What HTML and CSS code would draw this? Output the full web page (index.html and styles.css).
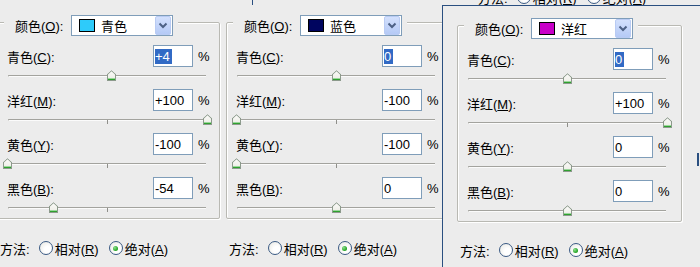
FILE: index.html
```html
<!DOCTYPE html>
<html lang="zh-CN">
<head>
<meta charset="utf-8">
<title>可选颜色</title>
<link rel="stylesheet" href="styles.css">
</head>
<body>
<div class="screen">

  <section class="dlg p1">
    <div class="group">
      <div class="head">
        <span class="lbl">颜色(<u>O</u>):</span>
        <div class="combo"><span class="swatch cyan"></span><span class="combo-text">青色</span><span class="arrow"><svg width="16" height="19" viewBox="0 0 16 19"><defs><linearGradient id="ab1" x1="0" y1="0" x2="0" y2="1"><stop offset="0" stop-color="#d4e1fd"/><stop offset="1" stop-color="#b4c9f6"/></linearGradient></defs><rect x="0.5" y="0.5" width="15" height="18" rx="1.5" fill="url(#ab1)" stroke="#b9cbf3"/><path d="M4.5 7.5 L8 11 L11.5 7.5" fill="none" stroke="#4d6185" stroke-width="2"/></svg></span></div>
      </div>
      <div class="rows">
        <div class="row">
          <div class="field"><span class="lbl">青色(<u>C</u>):</span><span class="input"><span class="sel">+4</span></span><span class="pct">%</span></div>
          <div class="slider"><span class="track"></span><span class="tick"></span><span class="thumb" style="left:100px"></span></div>
        </div>
        <div class="row">
          <div class="field"><span class="lbl">洋红(<u>M</u>):</span><span class="input">+100</span><span class="pct">%</span></div>
          <div class="slider"><span class="track"></span><span class="tick"></span><span class="thumb" style="left:196px"></span></div>
        </div>
        <div class="row">
          <div class="field"><span class="lbl">黄色(<u>Y</u>):</span><span class="input">-100</span><span class="pct">%</span></div>
          <div class="slider"><span class="track"></span><span class="tick"></span><span class="thumb" style="left:-4px"></span></div>
        </div>
        <div class="row">
          <div class="field"><span class="lbl">黑色(<u>B</u>):</span><span class="input">-54</span><span class="pct">%</span></div>
          <div class="slider"><span class="track"></span><span class="tick"></span><span class="thumb" style="left:42px"></span></div>
        </div>
      </div>
    </div>
    <div class="method">
      <span class="m-lbl">方法:</span>
      <span class="radio"></span><span class="r-lbl">相对(<u>R</u>)</span>
      <span class="radio on"></span><span class="r-lbl">绝对(<u>A</u>)</span>
    </div>
  </section>

  <section class="dlg p2">
    <span class="edge"></span>
    <div class="group">
      <div class="head">
        <span class="lbl">颜色(<u>O</u>):</span>
        <div class="combo"><span class="swatch navy"></span><span class="combo-text">蓝色</span><span class="arrow"><svg width="16" height="19" viewBox="0 0 16 19"><defs><linearGradient id="ab2" x1="0" y1="0" x2="0" y2="1"><stop offset="0" stop-color="#d4e1fd"/><stop offset="1" stop-color="#b4c9f6"/></linearGradient></defs><rect x="0.5" y="0.5" width="15" height="18" rx="1.5" fill="url(#ab2)" stroke="#b9cbf3"/><path d="M4.5 7.5 L8 11 L11.5 7.5" fill="none" stroke="#4d6185" stroke-width="2"/></svg></span></div>
      </div>
      <div class="rows">
        <div class="row">
          <div class="field"><span class="lbl">青色(<u>C</u>):</span><span class="input"><span class="sel">0</span></span><span class="pct">%</span></div>
          <div class="slider"><span class="track"></span><span class="tick"></span><span class="thumb" style="left:96px"></span></div>
        </div>
        <div class="row">
          <div class="field"><span class="lbl">洋红(<u>M</u>):</span><span class="input">-100</span><span class="pct">%</span></div>
          <div class="slider"><span class="track"></span><span class="tick"></span><span class="thumb" style="left:-4px"></span></div>
        </div>
        <div class="row">
          <div class="field"><span class="lbl">黄色(<u>Y</u>):</span><span class="input">-100</span><span class="pct">%</span></div>
          <div class="slider"><span class="track"></span><span class="tick"></span><span class="thumb" style="left:-4px"></span></div>
        </div>
        <div class="row">
          <div class="field"><span class="lbl">黑色(<u>B</u>):</span><span class="input">0</span><span class="pct">%</span></div>
          <div class="slider"><span class="track"></span><span class="tick"></span><span class="thumb" style="left:96px"></span></div>
        </div>
      </div>
    </div>
    <div class="method">
      <span class="m-lbl">方法:</span>
      <span class="radio"></span><span class="r-lbl">相对(<u>R</u>)</span>
      <span class="radio on"></span><span class="r-lbl">绝对(<u>A</u>)</span>
    </div>
  </section>

  <section class="dlg p3">
    <span class="edge-r"></span>
    <div class="strip">
      <div class="method ghost">
        <span class="m-lbl">方法:</span>
        <span class="radio"></span><span class="r-lbl">相对(<u>R</u>)</span>
        <span class="radio"></span><span class="r-lbl">绝对(<u>A</u>)</span>
      </div>
    </div>
    <div class="win">
      <div class="group wide">
        <div class="head">
          <span class="lbl">颜色(<u>O</u>):</span>
          <div class="combo"><span class="swatch magenta"></span><span class="combo-text">洋红</span><span class="arrow"><svg width="16" height="19" viewBox="0 0 16 19"><defs><linearGradient id="ab3" x1="0" y1="0" x2="0" y2="1"><stop offset="0" stop-color="#d4e1fd"/><stop offset="1" stop-color="#b4c9f6"/></linearGradient></defs><rect x="0.5" y="0.5" width="15" height="18" rx="1.5" fill="url(#ab3)" stroke="#b9cbf3"/><path d="M4.5 7.5 L8 11 L11.5 7.5" fill="none" stroke="#4d6185" stroke-width="2"/></svg></span></div>
        </div>
        <div class="rows">
          <div class="row">
            <div class="field"><span class="lbl">青色(<u>C</u>):</span><span class="input"><span class="sel">0</span></span><span class="pct">%</span></div>
            <div class="slider"><span class="track"></span><span class="tick"></span><span class="thumb" style="left:96px"></span></div>
          </div>
          <div class="row">
            <div class="field"><span class="lbl">洋红(<u>M</u>):</span><span class="input">+100</span><span class="pct">%</span></div>
            <div class="slider"><span class="track"></span><span class="tick"></span><span class="thumb" style="left:196px"></span></div>
          </div>
          <div class="row">
            <div class="field"><span class="lbl">黄色(<u>Y</u>):</span><span class="input">0</span><span class="pct">%</span></div>
            <div class="slider"><span class="track"></span><span class="tick"></span><span class="thumb" style="left:96px"></span></div>
          </div>
          <div class="row">
            <div class="field"><span class="lbl">黑色(<u>B</u>):</span><span class="input">0</span><span class="pct">%</span></div>
            <div class="slider"><span class="track"></span><span class="tick"></span><span class="thumb" style="left:96px"></span></div>
          </div>
        </div>
      </div>
      <div class="method">
        <span class="m-lbl">方法:</span>
        <span class="radio"></span><span class="r-lbl">相对(<u>R</u>)</span>
        <span class="radio on"></span><span class="r-lbl">绝对(<u>A</u>)</span>
      </div>
    </div>
  </section>

</div>
</body>
</html>
```

FILE: styles.css
```css
* { box-sizing: border-box; }

html, body {
  margin: 0;
  padding: 0;
  background: #ececec;
}

.screen {
  display: flex;
  width: 700px;
  height: 267px;
  overflow: hidden;
  background: #ececec;
  font-family: "Liberation Sans", "Noto Sans CJK SC", sans-serif;
  font-size: 13px;
  color: #000;
}

u { text-decoration: underline; text-underline-offset: 1px; }

.dlg { flex: none; }

.p1 { width: 229px; margin-left: -3px; padding-top: 22px; }
.p2 { width: 216px; padding-top: 22px; position: relative; }
.p3 {
  width: 258px;
  display: flex;
  flex-direction: column;
  position: relative;
  z-index: 1;
}

.edge {
  position: absolute;
  left: 26px;
  top: 0;
  width: 1px;
  height: 5px;
  background: #2a4f80;
}
.edge-r {
  position: absolute;
  right: 1px;
  top: 153px;
  width: 2px;
  height: 13px;
  background: #2a4f80;
  z-index: 2;
}

.strip {
  height: 5px;
  overflow: hidden;
  padding-left: 33px;
}
.strip .method { margin-top: -13px; }

.win {
  flex: 1;
  background: #ececec;
  border-top: 1px solid #2a4f80;
  border-left: 1px solid #2a4f80;
  padding: 19px 0 0 14px;
}

/* group box */
.group {
  width: 223px;
  border: 1px solid #b9b9b3;
  box-shadow: inset 1px 1px 0 #fff, 1px 1px 0 #fff;
  border-radius: 2px;
}
.group.wide { width: 225px; }

.head {
  display: flex;
  align-items: center;
  height: 21px;
  margin: -8px 0 0 6px;
  padding: 0 5px 0 11px;
  width: max-content;
  background: #ececec;
}
.head .lbl { width: 56px; }

.combo {
  display: flex;
  align-items: center;
  width: 102px;
  height: 21px;
  border: 1px solid #7f9db9;
  background: #fff;
  padding: 0 1px 0 7px;
}
.swatch {
  width: 16px;
  height: 13px;
  border: 1px solid #000;
}
.cyan { background: #2ecbfa; }
.navy { background: #00055f; }
.magenta { background: #c800c8; }
.combo-text { margin-left: 6px; flex: 1; }
.arrow { display: flex; }

.rows { margin: 9px 0 0 9px; }

.field {
  display: grid;
  grid-template-columns: 146px 40px auto;
  align-items: center;
  height: 22px;
}
.input {
  height: 22px;
  border: 1px solid #7f9db9;
  background: #fff;
  display: flex;
  align-items: center;
  padding-left: 1px;
  line-height: 15px;
}
.sel {
  background: #316ac5;
  color: #fff;
  padding-right: 2px;
}
.pct { margin-left: 5px; }

.slider {
  position: relative;
  height: 22px;
  width: 202px;
}
.row:last-child .slider { height: 19px; }

.track {
  position: absolute;
  left: 1px;
  right: 3px;
  top: 8px;
  height: 2px;
  border-top: 1px solid #a3a39e;
  border-bottom: 1px solid #fbfbfb;
  border-left: 1px solid #b5b5b0;
}
.tick {
  position: absolute;
  left: 100px;
  top: 9px;
  width: 1px;
  height: 4px;
  background: #8f8f8a;
}
.thumb {
  position: absolute;
  top: 3px;
  width: 9px;
  height: 11px;
  background:
    linear-gradient(#fcfcfb, #f0f0ea 70%, #9bd79b 72%, #9bd79b 81%, #2fa12f 82%);
  clip-path: polygon(0 4px, 4.5px 0, 9px 4px, 9px 11px, 0 11px);
}
.thumb::before {
  content: "";
  position: absolute;
  inset: 0;
  background: #8c9a8c;
  clip-path: polygon(0 4px, 4.5px 0, 9px 4px, 9px 11px, 0 11px, 0 10px, 8px 10px, 8px 4.4px, 4.5px 1.2px, 1px 4.4px, 1px 10px, 0 10px);
}

/* method row */
.method {
  display: flex;
  align-items: center;
  height: 20px;
  margin: 19px 0 0 3px;
  white-space: nowrap;
}
.win .method { margin-top: 18px; }
.m-lbl { margin-right: 9px; }
.radio {
  width: 14px;
  height: 14px;
  border-radius: 50%;
  border: 1px solid #3a5a84;
  background: radial-gradient(circle at 65% 65%, #fff 30%, #e6e6e0 100%);
  margin-right: 2px;
  display: inline-flex;
  align-items: center;
  justify-content: center;
}
.radio.on::after {
  content: "";
  width: 5px;
  height: 5px;
  border-radius: 50%;
  background: radial-gradient(circle at 35% 35%, #8ee08e, #21a121 70%);
}
.r-lbl + .radio { margin-left: 10px; }
```
